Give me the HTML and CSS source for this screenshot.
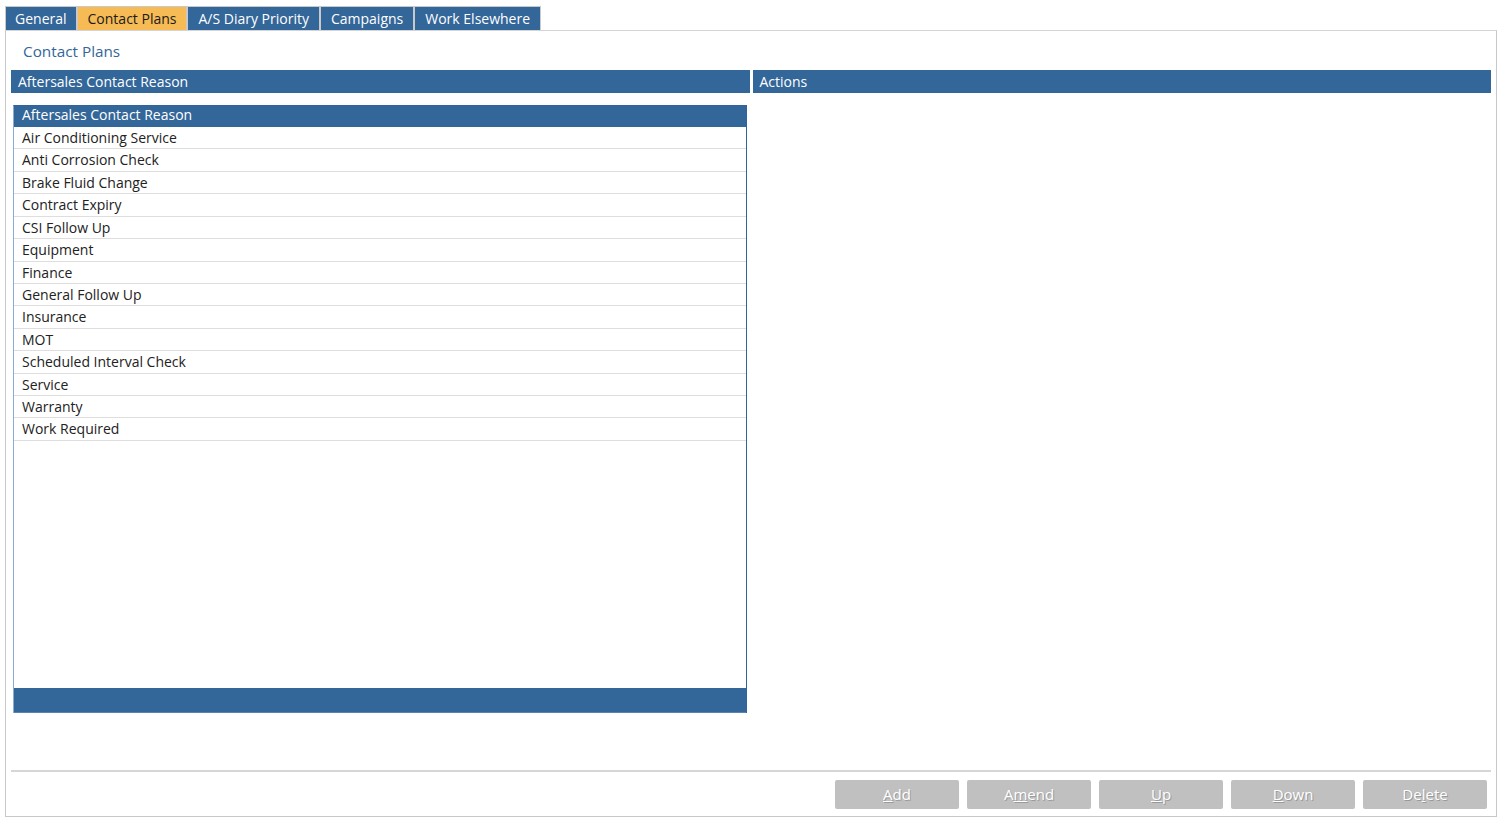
FILE: index.html
```html
<!DOCTYPE html>
<html lang="en">
  <head>
    <meta charset="utf-8">
    <title>Contact Plans</title>
    <link rel="stylesheet" href="styles.css">
  </head>
  <body>
    <!-- Tabs -->
    <nav class="tabs">
      <a class="tab" href="#">General</a>
      <a class="tab active" href="#">Contact Plans</a>
      <a class="tab" href="#">A/S Diary Priority</a>
      <a class="tab" href="#">Campaigns</a>
      <a class="tab" href="#">Work Elsewhere</a>
    </nav>

    <section class="panel">
      <h2 class="panel-title">Contact Plans</h2>

      <div class="columns">
        <div class="column">
          <div class="bar">Aftersales Contact Reason</div>
          <div class="list">
            <div class="list-head">Aftersales Contact Reason</div>
            <div class="list-body">
              <div class="row">Air Conditioning Service</div>
              <div class="row">Anti Corrosion Check</div>
              <div class="row">Brake Fluid Change</div>
              <div class="row">Contract Expiry</div>
              <div class="row">CSI Follow Up</div>
              <div class="row">Equipment</div>
              <div class="row">Finance</div>
              <div class="row">General Follow Up</div>
              <div class="row">Insurance</div>
              <div class="row">MOT</div>
              <div class="row">Scheduled Interval Check</div>
              <div class="row">Service</div>
              <div class="row">Warranty</div>
              <div class="row">Work Required</div>
            </div>
            <div class="list-foot"></div>
          </div>
        </div>
        <div class="column">
          <div class="bar">Actions</div>
        </div>
      </div>

      <!-- Botones -->
      <div class="buttons">
        <button disabled><u>A</u>dd</button>
        <button disabled>A<u>m</u>end</button>
        <button disabled><u>U</u>p</button>
        <button disabled><u>D</u>own</button>
        <button disabled>De<u>l</u>ete</button>
      </div>
    </section>
  </body>
</html>
```

FILE: styles.css
```css
* {
  margin: 0;
  padding: 0;
  box-sizing: border-box;
}

body {
  font-family: "Open Sans", "DejaVu Sans", sans-serif;
  font-size: 14px;
  background: #fff;
  color: #222;
}

/* Tabs */
.tabs {
  display: flex;
  padding: 6px 0 0 5px;
}

.tab {
  height: 24px;
  padding: 0 10px;
  line-height: 23px;
  background: #336699;
  color: #fff;
  text-decoration: none;
  border: 1px solid #c9c9c9;
  border-bottom: none;
}

.tab:first-child {
  padding: 0 9px;
}

.tab.active {
  background: #f6bb55;
  color: #1a1a1a;
}

/* Panel */
.panel {
  display: flex;
  flex-direction: column;
  height: 787px;
  margin: 0 5px;
  padding: 0 5px;
  border: 1px solid #c8c8c8;
  border-top-color: #d4d4d4;
}

.panel-title {
  height: 39px;
  padding: 10px 0 0 12px;
  font-size: 15.3px;
  font-weight: normal;
  color: #336699;
}

.columns {
  display: flex;
  gap: 3px;
  flex: 1;
}

.column {
  flex: 1;
}

.bar {
  height: 23px;
  padding-left: 7px;
  line-height: 23px;
  background: #336699;
  color: #fff;
}

/* Lista */
.list {
  display: flex;
  flex-direction: column;
  height: 608px;
  margin: 12px 3px 0 2px;
  border: 1px solid #2f63a0;
  border-left-color: #8eaad0;
  border-bottom: none;
}

.list-head {
  height: 21px;
  padding-left: 8px;
  line-height: 18px;
  background: #336699;
  color: #fff;
}

.list-body {
  flex: 1;
}

.row {
  height: 22.43px;
  padding-left: 8px;
  line-height: 21px;
  border-bottom: 1px solid #dedede;
}

.list-foot {
  height: 25px;
  background: #336699;
  border-bottom: 1px solid #5a84b4;
}

/* Botones */
.buttons {
  display: flex;
  justify-content: flex-end;
  gap: 8px;
  margin-bottom: 7px;
  padding: 8px 4px 0 0;
  border-top: 2px solid #d6d6d6;
}

.buttons button {
  width: 124px;
  height: 29px;
  padding-bottom: 2px;
  background: #c0c0c0;
  border: none;
  border-radius: 2px;
  color: #fff;
  font-family: inherit;
  font-size: 15px;
  text-shadow: 1px 1px 0 #9a9a9a;
}
```
